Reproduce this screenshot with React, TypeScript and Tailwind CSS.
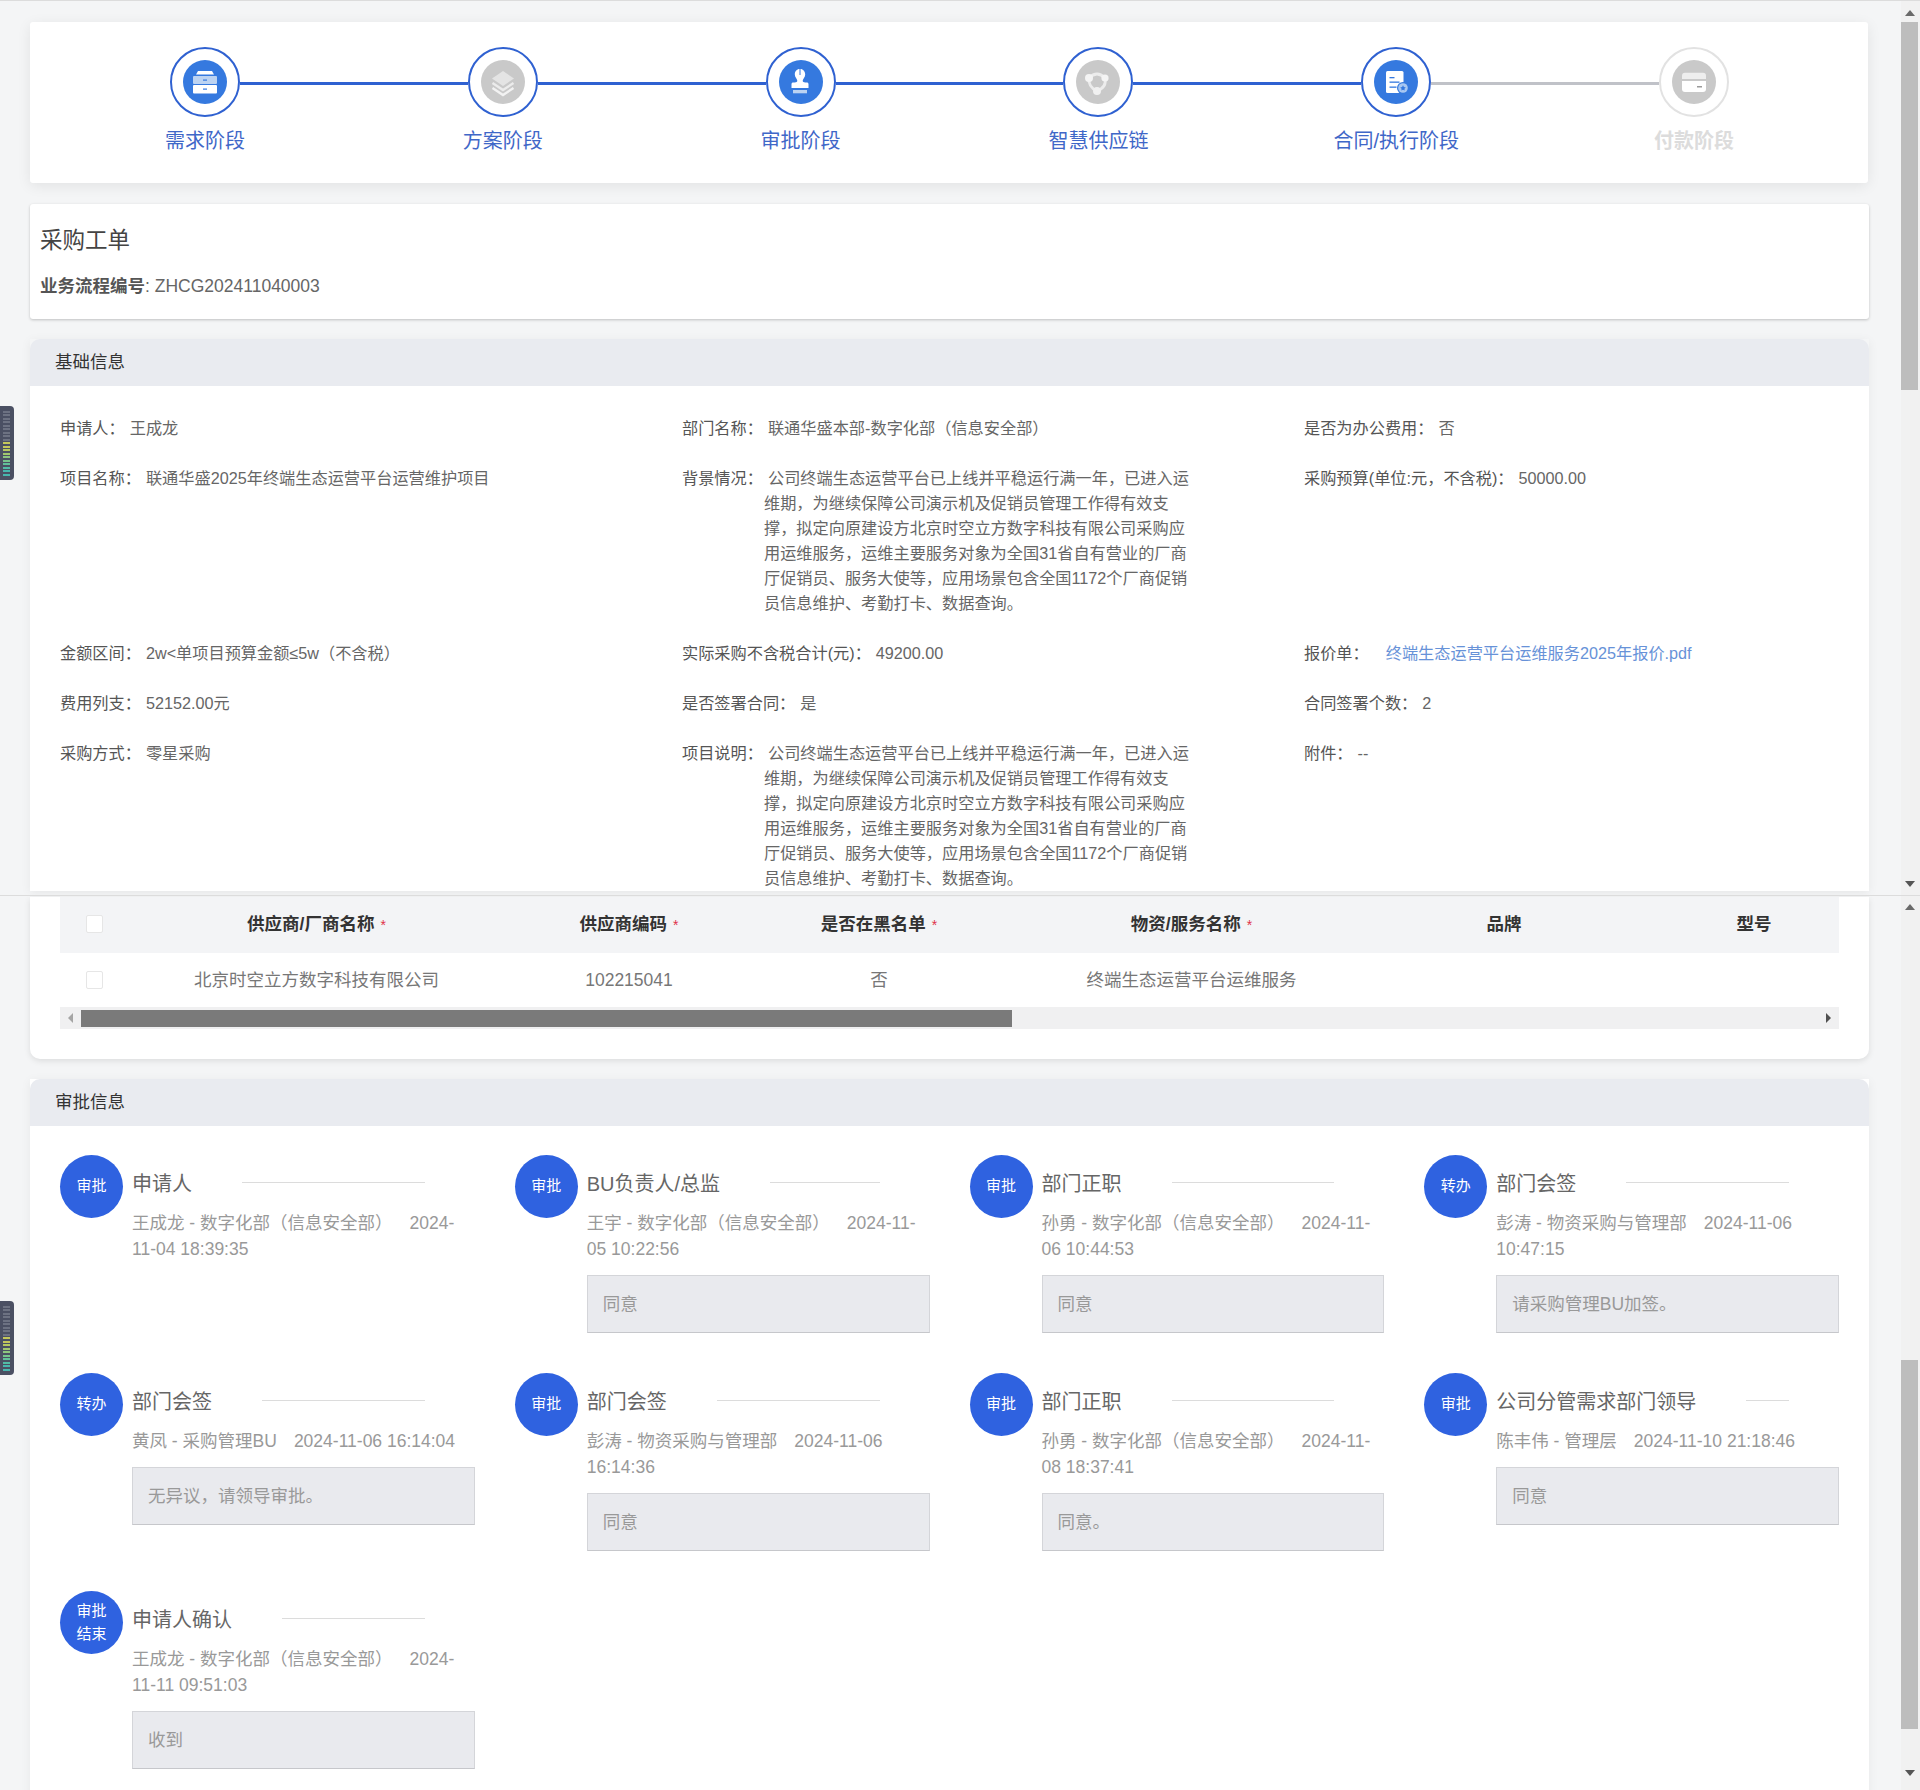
import React from 'react';

const FONT = "font-['Liberation_Sans','Noto_Sans_CJK_SC',sans-serif]";

const LONG_TEXT =
  '公司终端生态运营平台已上线并平稳运行满一年，已进入运维期，为继续保障公司演示机及促销员管理工作得有效支撑，拟定向原建设方北京时空立方数字科技有限公司采购应用运维服务，运维主要服务对象为全国31省自有营业的厂商厅促销员、服务大使等，应用场景包含全国1172个厂商促销员信息维护、考勤打卡、数据查询。';

// Stage icons, all drawn in a 44x44 box
const DrawerIcon = () => (
  <svg viewBox="0 0 44 44" className="w-[44px] h-[44px]">
    <circle cx="22" cy="22" r="22" fill="#3579df" />
    <path d="M15 11h14l2 3.5H13z" fill="#fff" />
    <rect x="10" y="16" width="24" height="8" rx="1" fill="#bcd3f2" />
    <rect x="10" y="25" width="24" height="8.5" rx="1" fill="#fff" />
    <rect x="20" y="19.5" width="4" height="1.2" fill="#3579df" />
    <rect x="20" y="28.5" width="4" height="1.2" fill="#3579df" />
  </svg>
);

const LayersIcon = () => (
  <svg viewBox="0 0 44 44" className="w-[44px] h-[44px]">
    <circle cx="22" cy="22" r="22" fill="#c9c9c9" />
    <path d="M22 11l11 7.5-11 7.5-11-7.5z" fill="#e4e4e4" />
    <path d="M11.5 23l10.5 7 10.5-7" fill="none" stroke="#ececec" strokeWidth="2.4" />
    <path d="M11.5 28l10.5 7 10.5-7" fill="none" stroke="#f2f2f2" strokeWidth="2.4" />
  </svg>
);

const StampIcon = () => (
  <svg viewBox="0 0 44 44" className="w-[44px] h-[44px]">
    <circle cx="22" cy="22" r="22" fill="#3579df" />
    <path d="M21 9c-3.6 0-5.2 2.6-5.2 5.4 0 3 2.5 4.3 2.5 6.4 0 1-1 1.5-2.5 1.6h-1.6c-1 0-1.7.7-1.7 1.7V28h17v-3.9c0-1-.7-1.7-1.7-1.7h-1.6c-1.5-.1-2.5-.6-2.5-1.6 0-2.1 2.5-3.4 2.5-6.4C26 11.6 24.6 9 21 9z" fill="#fff" />
    <rect x="20.5" y="6" width="1" height="9" fill="#3579df" />
    <rect x="14" y="30" width="14" height="3.3" fill="#bcd3f2" />
  </svg>
);

const NetworkIcon = () => (
  <svg viewBox="0 0 44 44" className="w-[44px] h-[44px]">
    <circle cx="22" cy="22" r="22" fill="#c9c9c9" />
    <path d="M13 18Q21 10 29 18M29 18Q31 27 21 31M13 18Q12 27 21 31" fill="none" stroke="#ececec" strokeWidth="2.8" />
    <circle cx="13" cy="18" r="4" fill="#f4f4f4" />
    <circle cx="29" cy="18" r="3.6" fill="#f4f4f4" />
    <circle cx="21" cy="31" r="4" fill="#f0f0f0" />
  </svg>
);

const ContractIcon = () => (
  <svg viewBox="0 0 44 44" className="w-[44px] h-[44px]">
    <circle cx="22" cy="22" r="22" fill="#3579df" />
    <rect x="12" y="11" width="17.5" height="22" rx="1.5" fill="#fff" />
    <rect x="15.5" y="17" width="5" height="1.3" fill="#3579df" />
    <rect x="15.5" y="21.5" width="10" height="1.3" fill="#3579df" />
    <rect x="15.5" y="26.5" width="7" height="1.3" fill="#3579df" />
    <circle cx="29" cy="28" r="6" fill="#3579df" />
    <circle cx="29" cy="28" r="4.8" fill="#a9c8f2" />
    <path d="M29 25.3l.9 1.8 1.9.3-1.4 1.3.3 1.9-1.7-.9-1.7.9.3-1.9-1.4-1.3 1.9-.3z" fill="#3579df" />
  </svg>
);

const CardIcon = () => (
  <svg viewBox="0 0 44 44" className="w-[44px] h-[44px]">
    <circle cx="22" cy="22" r="22" fill="#c9c9c9" />
    <path d="M10 19v-3.3a3 3 0 0 1 3-3h18a3 3 0 0 1 3 3V19z" fill="#eeeeee" />
    <path d="M10 21h24v8a3 3 0 0 1-3 3H13a3 3 0 0 1-3-3z" fill="#fff" />
    <rect x="25" y="26" width="5" height="1.5" fill="#9a9a9a" />
  </svg>
);

const stages = [
  { label: '需求阶段', icon: <DrawerIcon />, done: true, left: '', right: 'bg-[#2f61d1]' },
  { label: '方案阶段', icon: <LayersIcon />, done: true, left: 'bg-[#2f61d1]', right: 'bg-[#2f61d1]' },
  { label: '审批阶段', icon: <StampIcon />, done: true, left: 'bg-[#2f61d1]', right: 'bg-[#2f61d1]' },
  { label: '智慧供应链', icon: <NetworkIcon />, done: true, left: 'bg-[#2f61d1]', right: 'bg-[#2f61d1]' },
  { label: '合同/执行阶段', icon: <ContractIcon />, done: true, left: 'bg-[#2f61d1]', right: 'bg-[#c0c2c8]' },
  { label: '付款阶段', icon: <CardIcon />, done: false, left: 'bg-[#c0c2c8]', right: '' },
];

const Stepper = () => (
  <div className="h-[161px] bg-white rounded-[3px] shadow-[0_3px_14px_rgba(0,0,0,0.08)] mr-[1px] pl-[26px] pr-[25px] pt-[25px] grid grid-cols-6">
    {stages.map(s => (
      <div key={s.label} className="flex flex-col items-center">
        <div className="flex items-center w-full">
          <div className={`flex-1 h-[3px] mt-[2px] ${s.left}`} />
          <div
            className={`w-[70px] h-[70px] rounded-full border-2 bg-white flex items-center justify-center ${
              s.done ? 'border-[#2f61d1]' : 'border-[#e2e2e2]'
            }`}
          >
            {s.icon}
          </div>
          <div className={`flex-1 h-[3px] mt-[2px] ${s.right}`} />
        </div>
        <div
          className={`mt-[10px] h-[28px] leading-[28px] text-[20px] ${
            s.done ? 'text-[#3f67c8]' : 'text-[#dcdcdc] font-bold'
          }`}
        >
          {s.label}
        </div>
      </div>
    ))}
  </div>
);

const SectionHeader = ({ title }: { title: string }) => (
  <div className="h-[47px] bg-[#e9ebf0] rounded-t-[10px] pl-[25px] flex items-center text-[17.5px] text-[#333]">
    {title}
  </div>
);

const Field = ({ label, value, gap = 'mr-[5px]' }: { label: string; value: React.ReactNode; gap?: string }) => (
  <div className="text-[16.2px] leading-[25px] text-[#666] whitespace-nowrap">
    <span className={`text-[#555] ${gap}`}>{label}</span>
    {value}
  </div>
);

const LongField = ({ label }: { label: string }) => (
  <div className="flex text-[16.2px] leading-[25px] text-[#666]">
    <span className="w-[82px] shrink-0 text-[#555]">{label}</span>
    <div className="w-[426px] indent-[4px]">{LONG_TEXT}</div>
  </div>
);

const BasicInfo = () => (
  <div className="grid grid-cols-[622px_622px_1fr] gap-y-[25px] px-[30px] pt-[30px] bg-white">
    <Field label="申请人：" value="王成龙" />
    <Field label="部门名称：" value="联通华盛本部-数字化部（信息安全部）" />
    <Field label="是否为办公费用：" value="否" />

    <Field label="项目名称：" value="联通华盛2025年终端生态运营平台运营维护项目" />
    <LongField label="背景情况：" />
    <Field label="采购预算(单位:元，不含税)：" value="50000.00" />

    <Field label="金额区间：" value="2w<单项目预算金额≤5w（不含税）" />
    <Field label="实际采购不含税合计(元)：" value="49200.00" />
    <Field
      label="报价单："
      gap="mr-[17px]"
      value={<span className="text-[#6792d8]">终端生态运营平台运维服务2025年报价.pdf</span>}
    />

    <Field label="费用列支：" value="52152.00元" />
    <Field label="是否签署合同：" value="是" />
    <Field label="合同签署个数：" value="2" />

    <Field label="采购方式：" value="零星采购" />
    <LongField label="项目说明：" />
    <Field label="附件：" value="--" />
  </div>
);

const columns = [
  { title: '供应商/厂商名称', required: true, value: '北京时空立方数字科技有限公司' },
  { title: '供应商编码', required: true, value: '102215041' },
  { title: '是否在黑名单', required: true, value: '否' },
  { title: '物资/服务名称', required: true, value: '终端生态运营平台运维服务' },
  { title: '品牌', required: false, value: '' },
  { title: '型号', required: false, value: '' },
];

const Checkbox = () => (
  <div className="w-[17px] h-[18px] ml-[26px] bg-white border border-[#e6e6e6] rounded-[2px]" />
);

const SupplierTable = () => (
  <div className="mx-[30px] mt-[1px]">
    <div className="overflow-hidden">
      <div className="w-[1820px]">
        <div className="grid grid-cols-[69px_375px_250px_250px_375px_250px_250px] h-[56px] pb-[2px] items-center bg-[#f3f4f6]">
          <Checkbox />
          {columns.map(c => (
            <div key={c.title} className="text-center text-[17.5px] font-bold text-[#333]">
              {c.title}
              {c.required && <span className="ml-[6px] text-[14px] font-normal text-[#e0304a]">*</span>}
            </div>
          ))}
        </div>
        <div className="grid grid-cols-[69px_375px_250px_250px_375px_250px_250px] h-[54px] items-center">
          <Checkbox />
          {columns.map(c => (
            <div key={c.title} className="text-center text-[17.5px] text-[#777]">
              {c.value}
            </div>
          ))}
        </div>
      </div>
    </div>
    <div className="h-[22px] bg-[#f0f0f1] flex items-center">
      <div className="w-[21px] flex justify-center">
        <div className="w-0 h-0 border-y-[5px] border-y-transparent border-r-[5px] border-r-[#a5a5a5]" />
      </div>
      <div className="w-[931px] h-[17px] bg-[#7a7a7a]" />
      <div className="flex-1" />
      <div className="w-[21px] flex justify-center">
        <div className="w-0 h-0 border-y-[5px] border-y-transparent border-l-[5px] border-l-[#505050]" />
      </div>
    </div>
  </div>
);

const approvals = [
  { badge: ['审批'], title: '申请人', who: '王成龙 - 数字化部（信息安全部）', time: '2024-11-04 18:39:35', note: '' },
  { badge: ['审批'], title: 'BU负责人/总监', who: '王宇 - 数字化部（信息安全部）', time: '2024-11-05 10:22:56', note: '同意' },
  { badge: ['审批'], title: '部门正职', who: '孙勇 - 数字化部（信息安全部）', time: '2024-11-06 10:44:53', note: '同意' },
  { badge: ['转办'], title: '部门会签', who: '彭涛 - 物资采购与管理部', time: '2024-11-06 10:47:15', note: '请采购管理BU加签。' },
  { badge: ['转办'], title: '部门会签', who: '黄凤 - 采购管理BU', time: '2024-11-06 16:14:04', note: '无异议，请领导审批。' },
  { badge: ['审批'], title: '部门会签', who: '彭涛 - 物资采购与管理部', time: '2024-11-06 16:14:36', note: '同意' },
  { badge: ['审批'], title: '部门正职', who: '孙勇 - 数字化部（信息安全部）', time: '2024-11-08 18:37:41', note: '同意。' },
  { badge: ['审批'], title: '公司分管需求部门领导', who: '陈丰伟 - 管理层', time: '2024-11-10 21:18:46', note: '同意' },
  { badge: ['审批', '结束'], title: '申请人确认', who: '王成龙 - 数字化部（信息安全部）', time: '2024-11-11 09:51:03', note: '收到' },
];

const ApprovalItem = ({ item }: { item: (typeof approvals)[number] }) => (
  <div className="flex gap-[9px] min-w-0">
    <div className="w-[63px] h-[63px] pb-[2px] shrink-0 rounded-full bg-[#2f62e0] flex flex-col items-center justify-center text-white text-[15px] leading-[23px]">
      {item.badge.map(b => (
        <span key={b}>{b}</span>
      ))}
    </div>
    <div className="flex-1 min-w-0">
      <div className="flex items-center h-[36px] mt-[10px] mb-[9px]">
        <span className="mt-[2px] text-[20px] text-[#666] whitespace-nowrap">{item.title}</span>
        <div className="flex-1 h-px bg-[#dcdcdc] mx-[50px] -mt-[2px]" />
      </div>
      <div className="text-[17.5px] leading-[26px] text-[#999]">
        {item.who}
        <span className="ml-[17px]">{item.time}</span>
      </div>
      {item.note && (
        <div className="mt-[13px] h-[58px] bg-[#e9eaee] border border-[#d4d5d9] border-b-[#c6c7cb] px-[15px] flex items-center text-[17.5px] text-[#999]">
          {item.note}
        </div>
      )}
    </div>
  </div>
);

const ScrollArrow = ({ up }: { up?: boolean }) => (
  <div
    className={`w-0 h-0 border-x-[5px] border-x-transparent ${
      up ? 'border-b-[6px] border-b-[#6a6a6a]' : 'border-t-[6px] border-t-[#555]'
    }`}
  />
);

const meterBars = [
  'bg-[#6d7282]', 'bg-[#6d7282]', 'bg-[#6d7282]', 'bg-[#6d7282]', 'bg-[#6d7282]', 'bg-[#6d7282]', 'bg-[#6d7282]',
  'bg-[#6d7282]', 'bg-[#6d7282]', 'bg-[#c4c75a]', 'bg-[#c4c75a]', 'bg-[#b6c860]', 'bg-[#a2c86e]', 'bg-[#8cc67e]',
  'bg-[#76c48c]', 'bg-[#62c09a]', 'bg-[#52bca6]', 'bg-[#48b6ae]', 'bg-[#48b6ae]',
];

// Docked widget handle on the left edge of the window
const EdgeHandle = ({ className }: { className: string }) => (
  <div
    className={`absolute left-0 w-[14px] h-[74px] bg-[#4b5063] rounded-r-[4px] flex flex-col justify-center gap-[1.5px] pl-[3px] pr-[4px] ${className}`}
  >
    {meterBars.map((c, i) => (
      <div key={i} className={`h-[2px] ${c}`} />
    ))}
  </div>
);

export default function App() {
  return (
    <div className={`relative w-[1920px] h-[1790px] overflow-hidden bg-[#f4f5f6] ${FONT}`}>
      <EdgeHandle className="top-[406px]" />
      <EdgeHandle className="top-[1301px]" />

      {/* upper half of the capture */}
      <div className="h-[895px] flex border-t border-[#dcdcdc] overflow-hidden">
        <div className="flex-1 pl-[30px] pr-[32px] pt-[21px] overflow-hidden">
          <Stepper />
          <div className="mt-[21px] h-[115px] bg-white rounded-[3px] shadow-[0_1px_3px_rgba(0,0,0,0.22)] px-[10px] pt-[22px]">
            <div className="text-[22.5px] leading-[30px] text-[#444]">采购工单</div>
            <div className="mt-[17px] text-[17.5px] leading-[26px] text-[#666]">
              <span className="font-bold text-[#555]">业务流程编号</span>: ZHCG202411040003
            </div>
          </div>
          <div className="mt-[20px] shadow-[0_2px_10px_rgba(0,0,0,0.06)]">
            <SectionHeader title="基础信息" />
            <BasicInfo />
          </div>
        </div>
        <div className="w-[19px] bg-[#f1f1f1] flex flex-col items-center pr-[2px]">
          <div className="h-[21px] pt-[9px]">
            <ScrollArrow up />
          </div>
          <div className="w-[17px] h-[368px] bg-[#bdbdbd]" />
          <div className="flex-1" />
          <div className="h-[22px] pt-[8px]">
            <ScrollArrow />
          </div>
        </div>
      </div>

      {/* lower half of the capture */}
      <div className="h-[895px] flex border-t border-[#dcdcdc] overflow-hidden">
        <div className="flex-1 pl-[30px] pr-[32px] overflow-hidden">
          <div className="bg-white rounded-b-[10px] pb-[30px] shadow-[0_2px_6px_rgba(0,0,0,0.1)]">
            <SupplierTable />
          </div>
          <div className="mt-[20px] bg-white shadow-[0_2px_10px_rgba(0,0,0,0.06)]">
            <SectionHeader title="审批信息" />
            <div className="grid grid-cols-4 gap-x-10 gap-y-[40px] px-[30px] pt-[29px] pb-[30px]">
              {approvals.map((a, i) => (
                <ApprovalItem key={i} item={a} />
              ))}
            </div>
          </div>
        </div>
        <div className="w-[19px] bg-[#f1f1f1] flex flex-col items-center pr-[2px]">
          <div className="h-[22px] pt-[8px]">
            <ScrollArrow up />
          </div>
          <div className="w-[17px] h-[369px] mt-[442px] bg-[#bdbdbd]" />
          <div className="flex-1" />
          <div className="h-[20px]">
            <ScrollArrow />
          </div>
        </div>
      </div>
    </div>
  );
}
